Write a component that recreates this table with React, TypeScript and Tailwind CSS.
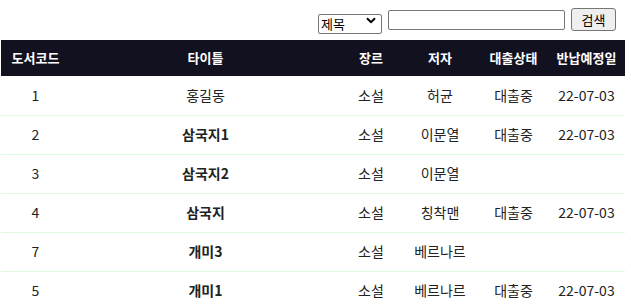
import React, { useState } from 'react';

type Book = {
  code: string;
  title: string;
  bold: boolean;
  genre: string;
  author: string;
  status: string;
  due: string;
};

const books: Book[] = [
  { code: '1', title: '홍길동', bold: false, genre: '소설', author: '허균', status: '대출중', due: '22-07-03' },
  { code: '2', title: '삼국지1', bold: true, genre: '소설', author: '이문열', status: '대출중', due: '22-07-03' },
  { code: '3', title: '삼국지2', bold: true, genre: '소설', author: '이문열', status: '', due: '' },
  { code: '4', title: '삼국지', bold: true, genre: '소설', author: '칭착맨', status: '대출중', due: '22-07-03' },
  { code: '7', title: '개미3', bold: true, genre: '소설', author: '베르나르', status: '', due: '' },
  { code: '5', title: '개미1', bold: true, genre: '소설', author: '베르나르', status: '대출중', due: '22-07-03' },
];

export default function App() {
  const [field, setField] = useState('title');
  const [query, setQuery] = useState('');

  return (
    <div className="w-[631px] h-[308px] overflow-hidden bg-white text-[#222] font-['Noto_Sans_CJK_KR','Noto_Sans',sans-serif]">
      {/* Search bar */}
      <form
        onSubmit={(e) => e.preventDefault()}
        className="h-[40px] flex items-start justify-end gap-[6px] pt-[7px] pr-[15px]"
      >
        <div className="relative mt-[3px]">
          <select
            value={field}
            onChange={(e) => setField(e.target.value)}
            className="appearance-none w-[64px] h-[20px] pl-[2px] border border-[#767676] rounded-[2px] text-[13px] leading-[18px] text-black bg-white"
          >
            <option value="title">제목</option>
            <option value="author">저자</option>
          </select>
          <svg className="absolute right-[6px] top-[7px] pointer-events-none" width="10" height="7" viewBox="0 0 10 7">
            <path d="M1 1.2 L5 5.2 L9 1.2" fill="none" stroke="#000" strokeWidth="2" />
          </svg>
        </div>
        <input
          value={query}
          onChange={(e) => setQuery(e.target.value)}
          className="mt-[3px] w-[177px] h-[20px] border border-[#767676] rounded-[2px] px-1 text-[13px]"
        />
        <button
          type="submit"
          className="w-[45px] h-[23px] mt-[1px] border border-[#767676] rounded-[3px] bg-[#efefef] text-[13px] leading-[20px] text-black"
        >
          검색
        </button>
      </form>

      {/* Book table */}
      <table className="ml-[1px] w-[624px] border-collapse table-fixed">
        <colgroup>
          <col className="w-[69px]" />
          <col className="w-[271px]" />
          <col className="w-[60px]" />
          <col className="w-[78px]" />
          <col className="w-[69px]" />
          <col className="w-[77px]" />
        </colgroup>
        <thead>
          <tr className="h-[36px] bg-[#12111f] text-white text-[13px] font-bold">
            <th className="text-center">도서코드</th>
            <th className="text-center">타이틀</th>
            <th className="text-center">장르</th>
            <th className="text-center">저자</th>
            <th className="text-center">대출상태</th>
            <th className="text-center">반납예정일</th>
          </tr>
        </thead>
        <tbody className="text-[14px]">
          {books.map((b) => (
            <tr key={b.code + b.title} className="h-[39px] border-b border-[#dcfadf]">
              <td className="text-center">{b.code}</td>
              <td className={b.bold ? 'text-center font-bold' : 'text-center'}>{b.title}</td>
              <td className="text-center">{b.genre}</td>
              <td className="text-center">{b.author}</td>
              <td className="text-center">{b.status}</td>
              <td className="text-center">{b.due}</td>
            </tr>
          ))}
        </tbody>
      </table>
    </div>
  );
}
